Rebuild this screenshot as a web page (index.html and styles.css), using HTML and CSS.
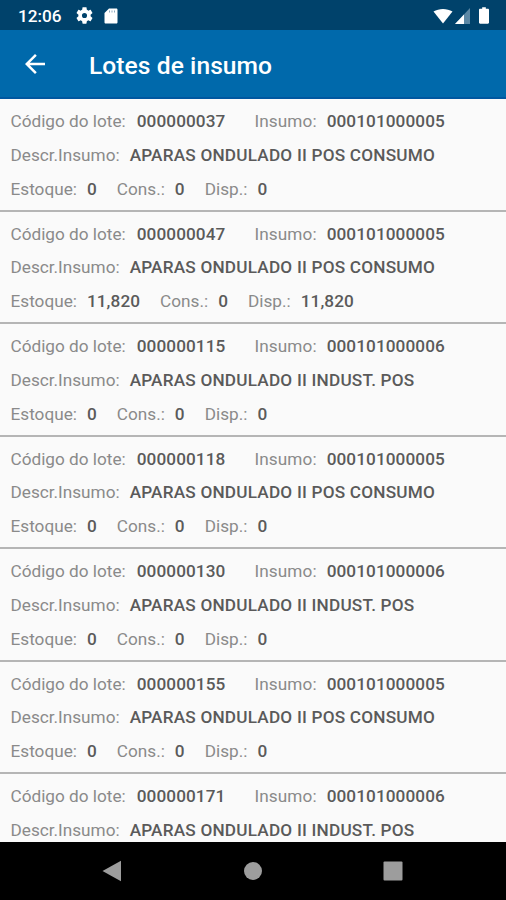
FILE: index.html
```
<!DOCTYPE html>
<html lang="pt-BR">
<head>
    <meta charset="UTF-8">
    <meta name="viewport" content="width=device-width, initial-scale=1.0">
    <title>Lotes de insumo</title>
    <link rel="stylesheet" href="styles.css">
</head>
<body>
    <div class="statusBar">
        <span class="clock">12:06</span>
        <svg class="gear" width="17" height="17" viewBox="2 2 20 20"><path fill="#fff" d="M19.14 12.94c.04-.3.06-.61.06-.94 0-.32-.02-.64-.07-.94l2.03-1.58c.18-.14.23-.41.12-.61l-1.92-3.32c-.12-.22-.37-.29-.59-.22l-2.39.96c-.5-.38-1.03-.7-1.62-.94l-.36-2.54c-.04-.24-.24-.41-.48-.41h-3.84c-.24 0-.43.17-.47.41l-.36 2.54c-.59.24-1.13.57-1.62.94l-2.39-.96c-.22-.08-.47 0-.59.22L2.74 8.87c-.12.21-.08.47.12.61l2.03 1.58c-.05.3-.09.63-.09.94s.02.64.07.94l-2.03 1.58c-.18.14-.23.41-.12.61l1.92 3.32c.12.22.37.29.59.22l2.39-.96c.5.38 1.03.7 1.62.94l.36 2.54c.05.24.24.41.48.41h3.84c.24 0 .44-.17.47-.41l.36-2.54c.59-.24 1.13-.56 1.62-.94l2.39.96c.22.08.47 0 .59-.22l1.92-3.32c.12-.22.07-.47-.12-.61l-2.01-1.58zM12 15a3 3 0 1 1 0-6 3 3 0 0 1 0 6z"/></svg>
        <svg class="card" width="14" height="16" viewBox="0 0 14 16"><path fill="#fff" d="M5 .5h7.2c.8 0 1.3.5 1.3 1.3v12.4c0 .8-.5 1.3-1.3 1.3H1.8c-.8 0-1.3-.5-1.3-1.3V5z"/><path stroke="#8fabc0" stroke-width="1" d="M5.500 2.500v2M8 2.500v2M10.500 2.500v2"/></svg>
        <div class="statusIcons">
            <svg width="20" height="16" viewBox="0 0 20 16"><path fill="#fff" d="M.5 3.500C6 0 14 0 19.500 3.500L10 15.500z"/></svg>
            <svg width="15" height="16" viewBox="0 0 15 16"><path fill="#5c88a5" d="M15 0v16H0z"/><path fill="#fff" d="M9 6.400V16H0z"/></svg>
            <svg class="battery" width="10" height="17" viewBox="0 0 11 18"><path fill="#fff" d="M3.500 0h4v1.500h2.300c.7 0 1.200.5 1.200 1.200v14c0 .7-.5 1.300-1.200 1.300H1.200C.5 18 0 17.400 0 16.700v-14c0-.7.5-1.200 1.200-1.200h2.300z"/></svg>
        </div>
    </div>
    <div class="toolbar">
        <svg width="20" height="20" viewBox="4 4 16 16"><path fill="#fff" d="M20 11H7.830l5.590-5.590L12 4l-8 8 8 8 1.410-1.410L7.830 13H20z"/></svg>
        <h1>Lotes de insumo</h1>
    </div>
    <div class="list" id="list"></div>
    <div class="navBar">
        <svg width="20" height="22" viewBox="0 0 20 22"><path fill="#9d9d9d" d="M19 .8v20.400L.5 11z"/></svg>
        <svg width="18" height="18" viewBox="0 0 18 18"><circle cx="9" cy="9" r="9" fill="#9d9d9d"/></svg>
        <svg width="20" height="20" viewBox="0 0 20 20"><rect x=".5" y=".5" width="19" height="19" rx="1" fill="#9d9d9d"/></svg>
    </div>
    <script src="script.js"></script>
</body>
</html>
```
FILE: styles.css
```
body {
    margin: 0;
    height: 900px;
    display: flex;
    flex-direction: column;
    overflow: hidden;
    background-color: #fafafa;
    font-family: Roboto, sans-serif;
}

.statusBar {
    height: 30px;
    flex: none;
    box-sizing: border-box;
    display: flex;
    align-items: center;
    padding: 1px 17px 0 18px;
    background-color: #00426b;
    color: white;
}
.clock {
    width: 58px;
    font-size: 17.2px;
    font-weight: 500;
}
.card {
    margin-left: 11px;
}
.statusIcons {
    display: flex;
    align-items: center;
    gap: 2px;
    margin-left: auto;
}
.battery {
    margin-left: 7px;
}

.toolbar {
    height: 69px;
    flex: none;
    box-sizing: border-box;
    display: flex;
    align-items: center;
    padding: 0 25px;
    background-color: #0069ab;
    border-bottom: 2px solid #0057a0;
}
.toolbar h1 {
    margin: 3px 0 0 44px;
    color: white;
    font-size: 24.6px;
    font-weight: 500;
    letter-spacing: 0.06px;
}
.toolbar svg {
    margin-top: 1px;
}

.list {
    flex: 1;
    min-height: 0;
    overflow: hidden;
}
.item {
    height: 112.5px;
    box-sizing: border-box;
    padding: 6px 10.5px 0;
    border-bottom: 2px solid #b5b5b5;
}
.line {
    height: 33.8px;
    line-height: 33.8px;
    display: flex;
    white-space: nowrap;
    font-size: 17.2px;
    color: #8a8a8a;
}
.line b {
    margin: 0 20px 0 10px;
    font-weight: 500;
    color: #5a5a5a;
    letter-spacing: 0.08px;
}
.line .code {
    margin-right: 29px;
}
.line .code, .line .code ~ span {
    letter-spacing: 0.09px;
}
.line .code {
    margin-left: 11px;
}
.line .descr {
    letter-spacing: 0.2px;
}

.navBar {
    height: 58px;
    flex: none;
    box-sizing: border-box;
    display: flex;
    align-items: center;
    justify-content: space-between;
    padding: 0 103px 0 102px;
    background-color: black;
}
```
FILE: script.js
```
const lotes = [
    ["000000037", "000101000005", "APARAS ONDULADO II POS CONSUMO", "0"],
    ["000000047", "000101000005", "APARAS ONDULADO II POS CONSUMO", "11,820"],
    ["000000115", "000101000006", "APARAS ONDULADO II INDUST. POS", "0"],
    ["000000118", "000101000005", "APARAS ONDULADO II POS CONSUMO", "0"],
    ["000000130", "000101000006", "APARAS ONDULADO II INDUST. POS", "0"],
    ["000000155", "000101000005", "APARAS ONDULADO II POS CONSUMO", "0"],
    ["000000171", "000101000006", "APARAS ONDULADO II INDUST. POS"]
];

var list = document.getElementById("list");
lotes.forEach(([lote, insumo, descr, estoque]) => {
    var saldo = "";
    if (estoque) {
        saldo = `<div class="line"><span>Estoque:</span><b>${estoque}</b><span>Cons.:</span><b>0</b><span>Disp.:</span><b>${estoque}</b></div>`;
    }
    list.innerHTML += `
        <div class="item">
            <div class="line"><span>Código do lote:</span><b class="code">${lote}</b><span>Insumo:</span><b>${insumo}</b></div>
            <div class="line"><span>Descr.Insumo:</span><b class="descr">${descr}</b></div>
            ${saldo}
        </div>`;
});
```
